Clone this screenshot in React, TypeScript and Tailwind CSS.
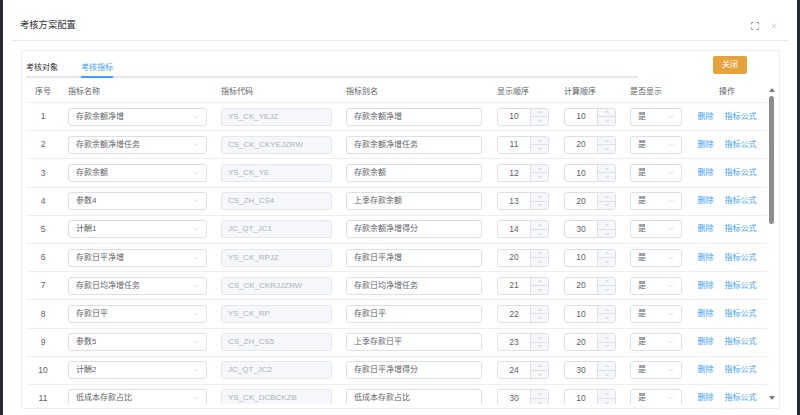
import React from "react";
import { ChevronDown, ChevronUp, X } from "lucide-react";

type Row = {
  name: string;
  code: string;
  alias: string;
  show: number;
  calc: number;
};

const rows: Row[] = [
  { name: "存款余额净增", code: "YS_CK_YEJZ", alias: "存款余额净增", show: 10, calc: 10 },
  { name: "存款余额净增任务", code: "CS_CK_CKYEJZRW", alias: "存款余额净增任务", show: 11, calc: 20 },
  { name: "存款余额", code: "YS_CK_YE", alias: "存款余额", show: 12, calc: 10 },
  { name: "参数4", code: "CS_ZH_CS4", alias: "上季存款余额", show: 13, calc: 20 },
  { name: "计酬1", code: "JC_QT_JC1", alias: "存款余额净增得分", show: 14, calc: 30 },
  { name: "存款日平净增", code: "YS_CK_RPJZ", alias: "存款日平净增", show: 20, calc: 10 },
  { name: "存款日均净增任务", code: "CS_CK_CKRJJZRW", alias: "存款日均净增任务", show: 21, calc: 20 },
  { name: "存款日平", code: "YS_CK_RP", alias: "存款日平", show: 22, calc: 10 },
  { name: "参数5", code: "CS_ZH_CS5", alias: "上季存款日平", show: 23, calc: 20 },
  { name: "计酬2", code: "JC_QT_JC2", alias: "存款日平净增得分", show: 24, calc: 30 },
  { name: "低成本存款占比", code: "YS_CK_DCBCKZB", alias: "低成本存款占比", show: 30, calc: 10 },
];

function Select({ value, width }: { value: string; width: string }) {
  return (
    <div className={`${width} h-[18px] flex items-center justify-between pl-[7px] pr-[6px] border border-[#dcdfe6] rounded-[3px] bg-white text-[#606266]`}>
      <span className="truncate">{value}</span>
      <ChevronDown size={8} strokeWidth={1.5} className="text-[#c0c4cc] shrink-0" />
    </div>
  );
}

function NumberBox({ value }: { value: number }) {
  return (
    <div className="w-[52px] h-[18px] flex border border-[#dcdfe6] rounded-[3px] bg-white overflow-hidden">
      <div className="flex-1 flex items-center justify-center text-[8.5px] text-[#606266]">{value}</div>
      <div className="w-[18px] flex flex-col border-l border-[#dcdfe6] bg-[#f5f7fa] text-[#909399]">
        <div className="flex-1 flex items-center justify-center border-b border-[#dcdfe6]">
          <ChevronUp size={6} strokeWidth={1.5} />
        </div>
        <div className="flex-1 flex items-center justify-center">
          <ChevronDown size={6} strokeWidth={1.5} />
        </div>
      </div>
    </div>
  );
}

function FullscreenIcon() {
  return (
    <svg width="8" height="8" viewBox="0 0 8 8" fill="none" stroke="#909399" strokeWidth="0.9">
      <path d="M0.5 2.5V0.5H2.5M5.5 0.5H7.5V2.5M7.5 5.5V7.5H5.5M2.5 7.5H0.5V5.5" />
    </svg>
  );
}

export default function App() {
  return (
    <div className="w-[800px] h-[415px] bg-[#262a31] px-[3px] font-['Liberation_Sans','Noto_Sans_CJK_SC',sans-serif]">
      <div className="h-full bg-white flex flex-col">
        {/* header */}
        <div className="h-[41px] mx-[8px] pl-[9px] pr-[11px] pt-[12px] flex items-center justify-between border-b border-[#e8eaef]">
          <span className="text-[9.3px] text-[#303133]">考核方案配置</span>
          <div className="flex items-center gap-[11px]">
            <FullscreenIcon />
            <X size={8} strokeWidth={1.3} className="text-[#909399]" />
          </div>
        </div>

        {/* card */}
        <div className="mt-[9px] ml-[18px] mr-[17px] h-[359px] border border-[#ebeef5] rounded-[2px] flex flex-col text-[8px]">
          <div className="h-[27px] flex pl-[4px] pr-[32px]">
            <div className="w-[612px] flex items-end gap-[23px] border-b-2 border-[#e4e7ed]">
              <div className="-mb-[2px] pb-[3px] border-b-2 border-transparent leading-[10px] text-[#303133]">考核对象</div>
              <div className="-mb-[2px] pb-[3px] border-b-2 border-[#409eff] leading-[10px] text-[#409eff]">考核指标</div>
            </div>
            <div className="flex-1" />
            <div className="mt-[5px] w-[34px] h-[18px] flex items-center justify-center rounded-[2px] bg-[#e6a23c] text-white">关闭</div>
          </div>

          <div className="h-[326px] flex pl-[4px]">
            <div className="w-[741px] overflow-hidden">
              <div className="h-[25px] flex items-center pt-[4px] border-b border-[#ebeef5] text-[#606266]">
                <div className="w-[34px] text-center">序号</div>
                <div className="w-[153px] pl-[8px]">指标名称</div>
                <div className="w-[125px] pl-[8px]">指标代码</div>
                <div className="w-[151px] pl-[8px]">指标别名</div>
                <div className="w-[67px] pl-[8px]">显示顺序</div>
                <div className="w-[66px] pl-[8px]">计算顺序</div>
                <div className="w-[68px] pl-[8px]">是否显示</div>
                <div className="w-[74px] text-center">操作</div>
              </div>
              {rows.map((r, i) => (
                <div key={i} className="h-[28.2px] flex items-center border-b border-[#ebeef5] shrink-0">
                  <div className="w-[34px] text-center text-[8.5px] text-[#606266]">{i + 1}</div>
                  <div className="w-[153px] pl-[8px]">
                    <Select value={r.name} width="w-[139px]" />
                  </div>
                  <div className="w-[125px] pl-[8px]">
                    <div className="w-[111px] h-[18px] flex items-center pl-[6px] border border-[#e4e7ed] rounded-[3px] bg-[#f5f7fa] text-[#adb1b8]">
                      {r.code}
                    </div>
                  </div>
                  <div className="w-[151px] pl-[8px]">
                    <div className="w-[136px] h-[18px] flex items-center pl-[7px] border border-[#dcdfe6] rounded-[3px] text-[#606266]">
                      {r.alias}
                    </div>
                  </div>
                  <div className="w-[67px] pl-[8px]">
                    <NumberBox value={r.show} />
                  </div>
                  <div className="w-[66px] pl-[8px]">
                    <NumberBox value={r.calc} />
                  </div>
                  <div className="w-[68px] pl-[8px]">
                    <Select value="是" width="w-[52px]" />
                  </div>
                  <div className="w-[74px] flex justify-center gap-[11px] text-[#409eff]">
                    <span>删除</span>
                    <span>指标公式</span>
                  </div>
                </div>
              ))}
            </div>

            {/* scrollbar */}
            <div className="w-[9px] flex flex-col items-center pt-[10px] pb-[4px]">
              <svg width="6" height="4" viewBox="0 0 6 4"><polygon points="3,0 6,4 0,4" fill="#7d7d7d" /></svg>
              <div className="mt-[4px] w-[4.5px] h-[128px] rounded-full bg-[#8c8c8c]" />
              <div className="flex-1" />
              <svg width="6" height="4" viewBox="0 0 6 4"><polygon points="0,0 6,0 3,4" fill="#7d7d7d" /></svg>
            </div>
          </div>
        </div>
      </div>
    </div>
  );
}
